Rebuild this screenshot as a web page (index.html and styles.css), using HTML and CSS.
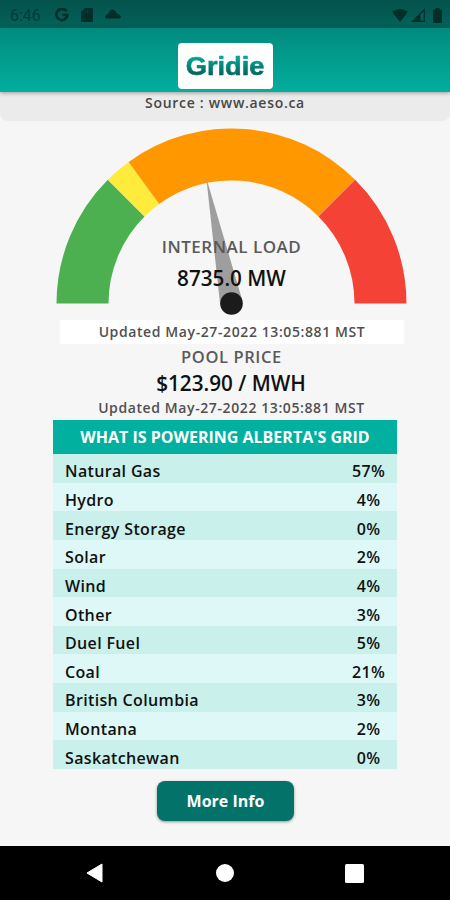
FILE: index.html
```html
<!DOCTYPE html>
<html lang="en">

<head>
    <meta charset="UTF-8">
    <meta name="viewport" content="width=device-width, initial-scale=1.0">
    <title>Gridie</title>
    <link rel="stylesheet" href="styles.css">
</head>

<body>
    <div class="screen">
        <!-- Status bar -->
        <div class="status-bar">
            <span class="time">6:46</span>
            <svg class="icon-google" width="14" height="14" viewBox="0 0 14 14">
                <path d="M11.6 3.2A5.6 5.6 0 1 0 12.6 7H7.3" fill="none" stroke="#022e2a" stroke-width="2.6" />
            </svg>
            <svg class="icon-sd" width="12" height="14" viewBox="0 0 12 14">
                <path d="M4 0h6.8Q12 0 12 1.3v11.4Q12 14 10.8 14H1.2Q0 14 0 12.7V4z" fill="#022e2a" />
                <path d="M4.2 2.2v2.5M6.5 2.2v2.5M8.8 2.2v2.5" stroke="#034740" stroke-width="1" />
            </svg>
            <svg class="icon-cloud" width="16" height="10" viewBox="0 0 16 10">
                <path d="M2 9.5Q-.5 9 .3 7.2 1 5.5 3.5 4.5 5 .5 7.5.5T11.5 4.2Q15 5 15.8 7.3 16 9.5 14 9.5z" fill="#022e2a" />
            </svg>
            <div class="status-right">
                <svg width="16" height="13" viewBox="0 0 16 13">
                    <path d="M0 2.8Q8-2.6 16 2.8L8 13z" fill="#022e2a" />
                </svg>
                <svg width="14" height="14" viewBox="0 0 14 14">
                    <path d="M0 14L14 0v14z" fill="#022e2a" />
                    <path d="M9.5 6.5L12.7 3.3v9.4H9.5z" fill="#035e57" />
                </svg>
                <svg class="icon-battery" width="9" height="15" viewBox="0 0 9 15">
                    <path d="M2.5 0h4v1.5H8q1 0 1 1V14q0 1-1 1H1q-1 0-1-1V2.5q0-1 1-1h1.5z" fill="#022e2a" />
                </svg>
            </div>
        </div>

        <header class="header">
            <div class="logo"><span>Gridie</span></div>
        </header>

        <div class="source">Source : www.aeso.ca</div>

        <!-- Internal load gauge -->
        <div class="gauge">
            <svg class="gauge-chart" width="450" height="200" viewBox="0 120 450 200">
                <path d="M56.5 302.5A175 175 0 0 1 107.8 178.8L144.5 215.5A123 123 0 0 0 108.5 302.5z" fill="#4caf50" />
                <path d="M107.8 178.8A175 175 0 0 1 128.6 160.9L159.2 203A123 123 0 0 0 144.5 215.5z" fill="#ffeb3b" />
                <path d="M128.6 160.9A175 175 0 0 1 355.2 178.8L318.5 215.5A123 123 0 0 0 159.2 203z" fill="#ff9800" />
                <path d="M355.2 178.8A175 175 0 0 1 406.5 302.5H354.5A123 123 0 0 0 318.5 215.5z" fill="#f44336" />
                <path d="M206.3 177L242.5 300L220.2 304z" fill="#9e9e9e" />
                <circle cx="231.5" cy="302.5" r="11.3" fill="#1b1b1b" />
            </svg>
            <div class="gauge-text">
                <div class="label load-label">INTERNAL LOAD</div>
                <div class="value load-value">8735.0 MW</div>
            </div>
        </div>
        <div class="updated updated-load">Updated May-27-2022 13:05:881 MST</div>

        <!-- Pool price -->
        <div class="label price-label">POOL PRICE</div>
        <div class="value price-value">$123.90 / MWH</div>
        <div class="updated updated-price">Updated May-27-2022 13:05:881 MST</div>

        <table class="grid-table">
            <thead>
                <tr>
                    <th colspan="2">WHAT IS POWERING ALBERTA'S GRID</th>
                </tr>
            </thead>
            <tbody>
                <tr>
                    <td>Natural Gas</td>
                    <td>57%</td>
                </tr>
                <tr>
                    <td>Hydro</td>
                    <td>4%</td>
                </tr>
                <tr>
                    <td>Energy Storage</td>
                    <td>0%</td>
                </tr>
                <tr>
                    <td>Solar</td>
                    <td>2%</td>
                </tr>
                <tr>
                    <td>Wind</td>
                    <td>4%</td>
                </tr>
                <tr>
                    <td>Other</td>
                    <td>3%</td>
                </tr>
                <tr>
                    <td>Duel Fuel</td>
                    <td>5%</td>
                </tr>
                <tr>
                    <td>Coal</td>
                    <td>21%</td>
                </tr>
                <tr>
                    <td>British Columbia</td>
                    <td>3%</td>
                </tr>
                <tr>
                    <td>Montana</td>
                    <td>2%</td>
                </tr>
                <tr>
                    <td>Saskatchewan</td>
                    <td>0%</td>
                </tr>
            </tbody>
        </table>

        <button class="more-info">More Info</button>

        <!-- Navigation bar -->
        <div class="nav-bar">
            <svg width="19" height="20" viewBox="0 0 19 20">
                <path d="M16 1v18L1 10z" fill="#fff" stroke="#fff" stroke-linejoin="round" />
            </svg>
            <svg width="18" height="18" viewBox="0 0 18 18">
                <circle cx="9" cy="9" r="9" fill="#fff" />
            </svg>
            <svg width="19" height="19" viewBox="0 0 19 19">
                <rect width="19" height="19" rx="1.5" fill="#fff" />
            </svg>
        </div>
    </div>
</body>

</html>
```
FILE: styles.css
```css
* {
    box-sizing: border-box;
}

body {
    font-family: "Open Sans", sans-serif;
    margin: 0;
    padding: 0;
    background-color: #f6f6f6;
}

.screen {
    display: flex;
    flex-direction: column;
    width: 450px;
    height: 900px;
    overflow: hidden;
}

.status-bar {
    display: flex;
    align-items: center;
    height: 28px;
    flex: none;
    padding: 2px 8px 0 10px;
    background: linear-gradient(#03534c, #03625a);
}

.time {
    width: 45px;
    font-family: Roboto, sans-serif;
    font-size: 16px;
    font-weight: 400;
    color: #023a35;
}

.icon-sd {
    margin-left: 12px;
}

.icon-cloud {
    margin: 0 0 2px 12px;
}

.status-right {
    display: flex;
    align-items: center;
    gap: 3px;
    margin-left: auto;
}

.icon-battery {
    margin-left: 5px;
}

.header {
    display: flex;
    justify-content: center;
    height: 64px;
    flex: none;
    padding-top: 15px;
    background: linear-gradient(#028b7f, #02ae9e);
    box-shadow: 0 1px 4px rgba(0, 0, 0, 0.35);
    position: relative;
}

.logo {
    display: flex;
    align-items: center;
    justify-content: center;
    width: 95px;
    height: 46px;
    background: #ffffff;
    border-radius: 4px;
}

.logo span {
    font-family: "Liberation Sans", sans-serif;
    font-size: 25px;
    font-weight: bold;
    line-height: 30px;
    background: linear-gradient(#02a897 20%, #045e56 85%);
    background-clip: text;
    -webkit-background-clip: text;
    -webkit-text-stroke: 0.6px transparent;
    color: transparent;
    transform: scaleX(1.09);
}

.source {
    height: 29px;
    flex: none;
    background: #ebebeb;
    border-radius: 0 0 8px 8px;
    text-align: center;
    font-size: 14px;
    font-weight: 600;
    line-height: 22px;
    letter-spacing: 0.7px;
    color: #484848;
}

.gauge {
    display: grid;
    height: 199px;
    flex: none;
}

.gauge-chart,
.gauge-text {
    grid-area: 1 / 1;
}

.gauge-chart {
    margin-top: -0.5px;
}

.gauge-text {
    padding-top: 114px;
    padding-left: 13px;
    z-index: 1;
}

.label {
    text-align: center;
    font-size: 16.5px;
    font-weight: 600;
    line-height: 24px;
    letter-spacing: 0.6px;
    color: #5a5a5a;
}

.load-label {
    font-size: 17px;
    letter-spacing: 0.5px;
}

.value {
    text-align: center;
    font-size: 20.7px;
    font-weight: 600;
    line-height: 28px;
    color: #111111;
}

.load-value {
    margin-top: 5px;
}

.updated {
    text-align: center;
    font-size: 14px;
    font-weight: 600;
    letter-spacing: 0.6px;
    color: #505050;
}

.updated-load {
    width: 344px;
    height: 24px;
    flex: none;
    margin-left: 60px;
    background: #ffffff;
    line-height: 23px;
}

.price-label {
    height: 24px;
    padding-left: 13px;
    line-height: 25px;
}

.price-value {
    height: 28px;
    padding-left: 12px;
    line-height: 30px;
}

.updated-price {
    height: 24px;
    padding-left: 13px;
    line-height: 23px;
}

.grid-table {
    width: 344px;
    margin-left: 53px;
    border-collapse: collapse;
}

th {
    height: 34px;
    padding: 0;
    background-color: #02b09f;
    color: white;
    font-size: 16px;
    font-weight: 700;
    line-height: 34px;
    text-align: center;
}

td {
    height: 28.65px;
    padding: 7px 0 0 12px;
    background: #ddf8f6;
    font-size: 16px;
    font-weight: 600;
    line-height: 21px;
    letter-spacing: 0.35px;
    color: #111111;
}

td:last-child {
    width: 58px;
    padding-left: 1px;
    text-align: center;
}

tr:nth-child(odd) td {
    background: #c9f0eb;
}

.more-info {
    width: 137px;
    height: 40px;
    flex: none;
    margin: 12px 0 0 157px;
    border: none;
    border-radius: 8px;
    background: #03736a;
    box-shadow: 0 1px 3px rgba(0, 0, 0, 0.4);
    color: white;
    font-family: inherit;
    font-size: 16px;
    font-weight: 700;
}

.nav-bar {
    display: flex;
    align-items: center;
    justify-content: space-between;
    height: 54px;
    flex: none;
    margin-top: auto;
    padding: 0 86px;
    background: #000000;
}
```
